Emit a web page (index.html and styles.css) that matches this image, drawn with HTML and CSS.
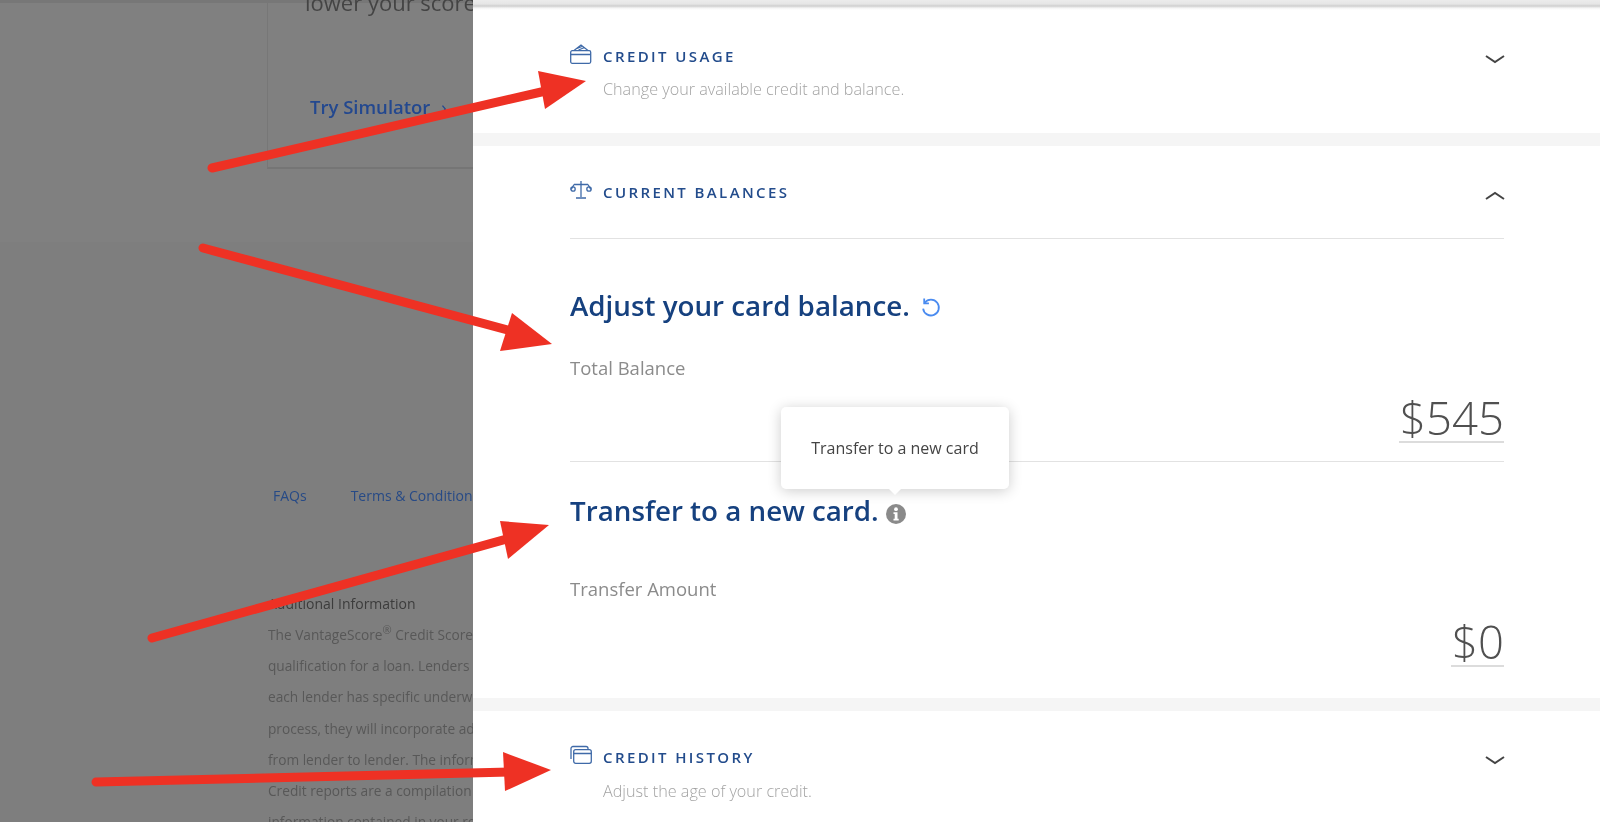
FILE: index.html
```html
<html>

<head>
	<link rel="stylesheet" href="styles.css">
</head>

<body>
	<div class="backdrop">
		<div class="top-band">
			<div class="tip-card">
				<p class="tip-text">lower your score</p>
				<a class="try-link">Try Simulator <span class="try-arrow">›</span></a>
			</div>
		</div>

		<div class="footer-links">
			<a>FAQs</a>
			<span class="sep"></span>
			<a>Terms &amp; Conditions</a>
		</div>

		<div class="legal">
			<h4>Additional Information</h4>
			<p>The VantageScore<sup>®</sup> Credit Score is not used</p>
			<p>qualification for a loan. Lenders use</p>
			<p>each lender has specific underwriting</p>
			<p>process, they will incorporate additional</p>
			<p>from lender to lender. The information</p>
			<p>Credit reports are a compilation of</p>
			<p>information contained in your report</p>
		</div>
	</div>

	<div class="panel">
		<div class="panel-top"></div>

		<section class="block block-usage">
			<div class="block-head">
				<div class="block-title">
					<svg class="block-icon" viewBox="0 0 22 20" fill="none">
						<rect x="0.7" y="6.7" width="20" height="12.6" rx="1.5" />
						<path d="M0.7 10.5h20M4 6.5l7-5.5 7 5.5M7 4.5l5-2M8.5 6l6-2.5" />
					</svg>
					<h3>CREDIT USAGE</h3>
				</div>
				<svg class="chevron" viewBox="0 0 20 10" fill="none"><path d="M1 2l9 6 9-6" /></svg>
			</div>
			<p class="block-desc">Change your available credit and balance.</p>
		</section>

		<section class="block block-balances">
			<div class="block-head head-ruled">
				<div class="block-title">
					<svg class="block-icon" viewBox="0 0 22 20" fill="none">
						<path d="M11 1v16M6 18h10M4 4.500h14M4 4.500l-2.800 5M18 4.500l2.800 5" />
						<circle cx="3" cy="9" r="2.200" />
						<circle cx="19" cy="9" r="2.200" />
					</svg>
					<h3>CURRENT BALANCES</h3>
				</div>
				<svg class="chevron" viewBox="0 0 20 10" fill="none"><path d="M1 8l9-6 9 6" /></svg>
			</div>

			<h2 class="adjust-title">Adjust your card balance.
				<svg class="reset-icon" viewBox="0 0 20 20" fill="none">
					<path d="M4.500 5.500A7.500 7.500 0 1 1 3 11" />
					<path d="M4 1.500v4.500h4.500" />
				</svg>
			</h2>
			<div class="field-label">Total Balance</div>
			<div class="amount-row"><span class="amount">$545</span></div>
			<hr class="rule">

			<div class="transfer">
				<h2 class="transfer-title">Transfer to a new card.
					<svg class="info-icon" viewBox="0 0 20 20">
						<circle cx="10" cy="10" r="10" fill="#8a8a8a" />
						<circle cx="10" cy="5.200" r="1.900" fill="#fff" />
						<path d="M7.500 8.300h4v6.500h1.200v1.700H7.500v-1.700h1.200v-4.800H7.500z" fill="#fff" />
					</svg>
				</h2>
				<div class="tooltip">Transfer to a new card</div>
			</div>
			<div class="field-label label-transfer">Transfer Amount</div>
			<div class="amount-row row-transfer"><span class="amount">$0</span></div>
		</section>

		<section class="block block-history">
			<div class="block-head">
				<div class="block-title">
					<svg class="block-icon" viewBox="0 0 22 20" fill="none">
						<rect x="3.700" y="4.700" width="17.600" height="13.600" rx="2" />
						<path d="M3.700 8.500h17.600M1 14V3.500a2 2 0 0 1 2-2h13a2 2 0 0 1 2 2v1" />
					</svg>
					<h3>CREDIT HISTORY</h3>
				</div>
				<svg class="chevron" viewBox="0 0 20 10" fill="none"><path d="M1 2l9 6 9-6" /></svg>
			</div>
			<p class="block-desc">Adjust the age of your credit.</p>
		</section>
	</div>

	<!-- red arrows drawn on top of the screenshot -->
	<svg class="arrows" viewBox="0 0 1600 822">
		<g class="arrow">
			<line x1="212" y1="168" x2="550" y2="90" />
			<polygon points="586,81 538,71 545,109" />
		</g>
		<g class="arrow">
			<line x1="203" y1="248" x2="515" y2="332" />
			<polygon points="552,344 512,313 500,351" />
		</g>
		<g class="arrow">
			<line x1="152" y1="638" x2="510" y2="538" />
			<polygon points="549,525 500,521 508,559" />
		</g>
		<g class="arrow">
			<line x1="96" y1="782" x2="510" y2="772" />
			<polygon points="551,770 503,752 505,791" />
		</g>
	</svg>
</body>

</html>
```

FILE: styles.css
```css
:root {
	--navy: #16417f;
	--title-blue: #234c8c;
	--grey-text: #8b8b8b;
	--pale-text: #a3a3a3;
	--gap-grey: #f5f5f5;
	--rule: #e2e2e2;
}

* {
	box-sizing: border-box;
}

html,
body {
	height: 100%;
}

body {
	margin: 0;
	display: flex;
	overflow: hidden;
	font-family: "Open Sans", "Liberation Sans", sans-serif;
	background: #7e7e7e;
}

/* dimmed page behind the drawer */
.backdrop {
	width: 473px;
	flex: none;
	height: 822px;
	overflow: hidden;
	white-space: nowrap;
	filter: blur(0.6px);
}

.top-band {
	height: 242px;
	background: #808080;
	border-top: 3px solid #777;
}

.tip-card {
	display: flow-root;
	margin-left: 267px;
	height: 166px;
	border-left: 1px solid #777;
	border-bottom: 2px solid #757575;
	padding-left: 37px;
}

.tip-text {
	margin: -16px 0 0;
	font-size: 22px;
	line-height: 30px;
	color: #444;
}

.try-link {
	display: block;
	margin: 77px 0 0 5px;
	font-size: 18.500px;
	line-height: 26px;
	font-weight: 600;
	color: #23488f;
}

.try-arrow {
	margin-left: 6px;
	font-weight: 400;
}

.footer-links {
	margin: 244px 0 0 273px;
	display: flex;
	align-items: center;
	font-size: 14px;
	line-height: 20px;
	color: #274a86;
}

.sep {
	width: 1px;
	height: 14px;
	margin: 0 22px;
	background: #6e6e6e;
}

.legal {
	margin: 86px 0 0 268px;
	font-size: 13.700px;
	color: #585858;
}

.legal h4 {
	margin: 0 0 3px;
	font-size: 14px;
	line-height: 24px;
	font-weight: 400;
	color: #3c3c3c;
}

.legal p {
	margin: 0;
	line-height: 31.200px;
	height: 31.200px;
}

.legal sup {
	font-size: 11px;
	line-height: 0;
}

/* drawer */
.panel {
	flex: 1;
	height: 822px;
	background: var(--gap-grey);
	overflow: hidden;
	display: flex;
	flex-direction: column;
	gap: 13px;
	filter: blur(0.35px);
}

.panel-top {
	height: 10px;
	margin-bottom: -13px;
	background: linear-gradient(#ececec 0, #e6e6e6 4px, #cfcfcf 6px, #f4f4f4 8px, #fff 10px);
}

.block {
	background: white;
	padding: 34px 96px 0 97px;
}

.block-usage {
	height: 123px;
}

.block-balances {
	height: 552px;
}

.block-history {
	flex: 1;
}

.block-head {
	display: flex;
	justify-content: space-between;
	align-items: center;
	height: 24px;
}

.head-ruled {
	height: 59px;
	align-items: flex-start;
	border-bottom: 1px solid var(--rule);
}

.block-title {
	display: flex;
	align-items: center;
	gap: 11px;
	height: 24px;
}

.block-title h3 {
	margin: 0;
	font-size: 15px;
	font-weight: 600;
	letter-spacing: 2.400px;
	color: var(--title-blue);
}

.block-icon {
	width: 22px;
	height: 20px;
	margin-top: -4px;
	stroke: #3f6aa8;
	stroke-width: 1.300;
}

.chevron {
	width: 20px;
	height: 10px;
	margin-top: 6px;
	margin-right: -1px;
	stroke: #444;
	stroke-width: 2;
}

.head-ruled .chevron {
	margin-top: 11px;
}

.block-desc {
	margin: 9px 0 0 33px;
	font-size: 16.200px;
	line-height: 24px;
	font-weight: 300;
	color: var(--pale-text);
}

.block-history .block-desc {
	margin-top: 10px;
}

h2 {
	margin: 0;
	font-size: 27.750px;
	line-height: 40px;
	font-weight: 600;
	color: var(--navy);
}

.adjust-title {
	margin-top: 46px;
}

.reset-icon {
	width: 21px;
	height: 21px;
	margin-left: 3px;
	vertical-align: -2px;
	stroke: #4a8bf0;
	stroke-width: 1.700;
}

.field-label {
	margin-top: 31px;
	font-size: 18.500px;
	line-height: 24px;
	color: var(--grey-text);
}

.amount-row {
	display: flex;
	justify-content: flex-end;
	margin-top: 13px;
}

.row-transfer {
	margin-top: 16px;
}

.amount {
	padding-left: 1px;
	font-size: 45.500px;
	line-height: 48px;
	font-weight: 300;
	color: #505050;
	border-bottom: 2px solid #dcdcdc;
}

.rule {
	margin: 18px 0 0;
	border: 0;
	border-top: 1px solid var(--rule);
}

.transfer {
	position: relative;
	margin-top: 28px;
}

.info-icon {
	width: 20px;
	height: 20px;
	vertical-align: -3px;
}

.tooltip {
	position: absolute;
	left: 211px;
	top: -83px;
	width: 228px;
	height: 82px;
	display: flex;
	align-items: center;
	justify-content: center;
	background: white;
	border-radius: 5px;
	box-shadow: 0 2px 14px rgba(0, 0, 0, 0.2);
	font-size: 16px;
	color: #444;
}

.tooltip::after {
	content: "";
	position: absolute;
	left: 107px;
	bottom: -6px;
	border: 7px solid transparent;
	border-bottom: 0;
	border-top-color: white;
}

.label-transfer {
	margin-top: 47px;
}

/* annotation layer */
.arrows {
	position: absolute;
	left: 0;
	top: 0;
	width: 1600px;
	height: 822px;
	pointer-events: none;
}

.arrow line {
	stroke: #ee3124;
	stroke-width: 9;
	stroke-linecap: round;
}

.arrow polygon {
	fill: #ee3124;
}
```
